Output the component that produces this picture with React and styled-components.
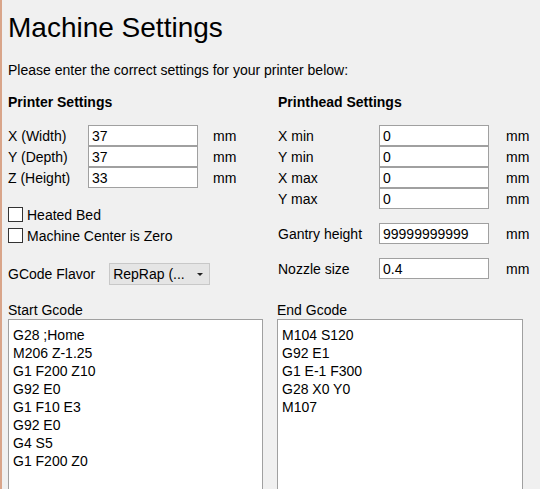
import React from "react";
import styled, { createGlobalStyle } from "styled-components";

const G = createGlobalStyle`
  html,body{margin:0;padding:0;background:#f0f0f0;overflow:hidden;}
  body{font-family:"Liberation Sans",Arial,sans-serif;color:#000;}
`;
const Page = styled.div`
  width:540px;height:489px;box-sizing:border-box;border-left:2px solid #d9a58a;
  padding:8px 0 0 6px;
`;
const Title = styled.h1`margin:0;font-weight:400;font-size:28px;line-height:40px;`;
const Sub = styled.div`font-size:14px;margin-top:13px;line-height:18px;`;
const Cols = styled.div`display:grid;grid-template-columns:254px 254px;column-gap:16px;margin-top:14px;`;
const Col = styled.div`display:flex;flex-direction:column;`;
const H = styled.div`font-weight:700;font-size:14px;line-height:18px;margin-bottom:14px;`;
const Row = styled.div`display:grid;grid-template-columns:${p=>p.$lw}px 110px auto;align-items:center;height:21px;margin-top:${p=>p.$mt||0}px;font-size:14px;`;
const Input = styled.div`height:21px;box-sizing:border-box;border:1px solid #a0a0a0;background:#fff;padding:2px 3px 0;font-size:14px;line-height:17px;margin-top:-1px;`;
const Unit = styled.span`padding-left:${p=>p.$pl}px;`;
const Check = styled.label`display:flex;align-items:center;gap:4px;font-size:14px;height:21px;margin-top:${p=>p.$mt||0}px;`;
const Box = styled.span`width:15px;height:15px;box-sizing:border-box;border:1px solid #333;background:#fff;`;
const FlavorRow = styled.div`display:flex;align-items:center;margin-top:17px;font-size:14px;height:22px;`;
const Select = styled.div`margin-left:14px;width:101px;height:22px;box-sizing:border-box;border:1px solid #c8c8c8;background:#e5e5e5;display:flex;align-items:center;justify-content:space-between;padding:0 6px 0 3px;`;
const Caret = styled.span`width:0;height:0;border-left:3px solid transparent;border-right:3px solid transparent;border-top:3px solid #222;`;
const Areas = styled.div`display:grid;grid-template-columns:255px 246px;column-gap:14px;margin-top:16px;`;
const ALabel = styled.div`font-size:14px;line-height:18px;`;
const Area = styled.div`margin-top:0;height:176px;box-sizing:border-box;border:1px solid #a0a0a0;background:#fff;padding:6px 4px;font-size:14px;line-height:18px;white-space:pre;`;

const L = [["X (Width)","37"],["Y (Depth)","37"],["Z (Height)","33"]];
const R = [["X min","0"],["Y min","0"],["X max","0"],["Y max","0"]];

export default function App(){
  return <><G/><Page>
    <Title>Machine Settings</Title>
    <Sub>Please enter the correct settings for your printer below:</Sub>
    <Cols>
      <Col>
        <H>Printer Settings</H>
        {L.map(([a,b])=><Row key={a} $lw={80}><span>{a}</span><Input>{b}</Input><Unit $pl={15}>mm</Unit></Row>)}
        <Check $mt={16}><Box/>Heated Bed</Check>
        <Check><Box/>Machine Center is Zero</Check>
        <FlavorRow>GCode Flavor<Select><span>RepRap (...</span><Caret/></Select></FlavorRow>
      </Col>
      <Col>
        <H>Printhead Settings</H>
        {R.map(([a,b])=><Row key={a} $lw={101}><span>{a}</span><Input>{b}</Input><Unit $pl={17}>mm</Unit></Row>)}
        <Row $lw={101} $mt={14}><span>Gantry height</span><Input>99999999999</Input><Unit $pl={17}>mm</Unit></Row>
        <Row $lw={101} $mt={14}><span>Nozzle size</span><Input>0.4</Input><Unit $pl={17}>mm</Unit></Row>
      </Col>
    </Cols>
    <Areas>
      <div><ALabel>Start Gcode</ALabel><Area>{"G28 ;Home\nM206 Z-1.25\nG1 F200 Z10\nG92 E0\nG1 F10 E3\nG92 E0\nG4 S5\nG1 F200 Z0"}</Area></div>
      <div><ALabel>End Gcode</ALabel><Area>{"M104 S120\nG92 E1\nG1 E-1 F300\nG28 X0 Y0\nM107"}</Area></div>
    </Areas>
  </Page></>;
}
